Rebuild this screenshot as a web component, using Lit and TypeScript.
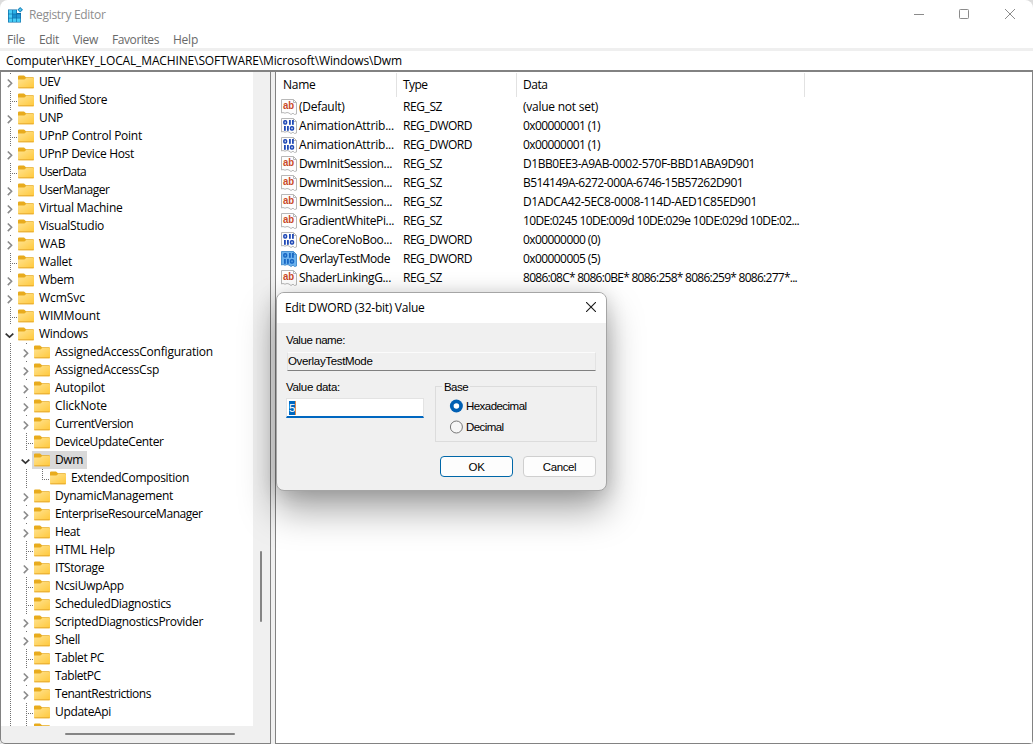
import { LitElement, html, css, svg, nothing } from "lit";
import { customElement, property } from "lit/decorators.js";

/** Text that is tracked so that its advance equals a given width. */
@customElement("fit-text")
class FitText extends LitElement {
  @property({ type: Number }) w = 0;
  @property() text = "";
  static styles = css`
    :host { display: inline-block; white-space: pre; }
  `;
  render() {
    return html`<span>${this.text}</span>`;
  }
  updated() {
    const s = this.renderRoot.querySelector("span") as HTMLElement;
    s.style.letterSpacing = "0px";
    const natural = s.getBoundingClientRect().width;
    if (this.w && this.text.length) s.style.letterSpacing = `${((this.w - natural) / this.text.length).toFixed(3)}px`;
  }
}

const t = (text: string, w: number) => html`<fit-text .text=${text} .w=${w}></fit-text>`;

type Cell = "pass" | "leaf" | "closed" | "open" | "last";
interface Node { name: string; w: number; cells: Cell[]; selected?: boolean }

const top = (name: string, w: number, c: Cell): Node => ({ name, w, cells: [c] });
const sub = (name: string, w: number, c: Cell): Node => ({ name, w, cells: ["pass", c] });

const NODES: Node[] = [
  top("UEV", 21, "closed"),
  top("Unified Store", 68, "leaf"),
  top("UNP", 24, "closed"),
  top("UPnP Control Point", 103, "leaf"),
  top("UPnP Device Host", 95, "closed"),
  top("UserData", 47, "leaf"),
  top("UserManager", 70.5, "closed"),
  top("Virtual Machine", 83.5, "closed"),
  top("VisualStudio", 65, "closed"),
  top("WAB", 26.5, "closed"),
  top("Wallet", 33, "leaf"),
  top("Wbem", 35, "closed"),
  top("WcmSvc", 46, "closed"),
  top("WIMMount", 61, "leaf"),
  top("Windows", 49, "open"),
  sub("AssignedAccessConfiguration", 158, "closed"),
  sub("AssignedAccessCsp", 104, "closed"),
  sub("Autopilot", 50, "closed"),
  sub("ClickNote", 52, "closed"),
  sub("CurrentVersion", 78, "closed"),
  sub("DeviceUpdateCenter", 108.5, "leaf"),
  { name: "Dwm", w: 28, cells: ["pass", "open"], selected: true },
  { name: "ExtendedComposition", w: 118, cells: ["pass", "pass", "last"] },
  sub("DynamicManagement", 118, "closed"),
  sub("EnterpriseResourceManager", 147.5, "closed"),
  sub("Heat", 25, "closed"),
  sub("HTML Help", 60, "leaf"),
  sub("ITStorage", 49, "closed"),
  sub("NcsiUwpApp", 69, "leaf"),
  sub("ScheduledDiagnostics", 116, "leaf"),
  sub("ScriptedDiagnosticsProvider", 148, "closed"),
  sub("Shell", 25, "closed"),
  sub("Tablet PC", 49, "leaf"),
  sub("TabletPC", 45.5, "closed"),
  sub("TenantRestrictions", 96, "closed"),
  sub("UpdateApi", 56, "leaf"),
  sub("", 0, "leaf"),
];

interface Value { name: string; nw: number; type: string; data: string; dw: number; selected?: boolean }
const VALUES: Value[] = [
  { name: "(Default)", nw: 45.5, type: "REG_SZ", data: "(value not set)", dw: 75 },
  { name: "AnimationAttrib...", nw: 95, type: "REG_DWORD", data: "0x00000001 (1)", dw: 77 },
  { name: "AnimationAttrib...", nw: 95, type: "REG_DWORD", data: "0x00000001 (1)", dw: 77 },
  { name: "DwmInitSession...", nw: 93, type: "REG_SZ", data: "D1BB0EE3-A9AB-0002-570F-BBD1ABA9D901", dw: 232 },
  { name: "DwmInitSession...", nw: 93, type: "REG_SZ", data: "B514149A-6272-000A-6746-15B57262D901", dw: 220 },
  { name: "DwmInitSession...", nw: 93, type: "REG_SZ", data: "D1ADCA42-5EC8-0008-114D-AED1C85ED901", dw: 234 },
  { name: "GradientWhitePi...", nw: 95, type: "REG_SZ", data: "10DE:0245 10DE:009d 10DE:029e 10DE:029d 10DE:02...", dw: 276 },
  { name: "OneCoreNoBoo...", nw: 93, type: "REG_DWORD", data: "0x00000000 (0)", dw: 77 },
  { name: "OverlayTestMode", nw: 91, type: "REG_DWORD", data: "0x00000005 (5)", dw: 77, selected: true },
  { name: "ShaderLinkingG...", nw: 92, type: "REG_SZ", data: "8086:08C* 8086:0BE* 8086:258* 8086:259* 8086:277*...", dw: 274 },
];

const folder = html`<svg class="folder" width="16" height="14" viewBox="0 0 16 14">
  <defs><linearGradient id="f" x1="0" y1="0" x2="1" y2="1"><stop offset="0" stop-color="#ffe391" /><stop offset="1" stop-color="#ffc83a" /></linearGradient></defs>
  <path d="M0 1.6Q0 .6 1.2 .6H6L8 2.2H15Q16 2.2 16 3.2V6H0Z" fill="#e8ab1d" />
  <path d="M0 4.6H6.4L8.2 3H15.2Q16 3 16 3.8V12.4Q16 13.2 15.2 13.2H.8Q0 13.2 0 12.4Z" fill="url(#f)" />
  <path d="M.3 12.8H15.7" stroke="#e3a62a" stroke-width=".9" />
</svg>`;

function cell(kind: Cell) {
  const dots = (d: string) => svg`<path d=${d} stroke="#707070" stroke-dasharray="1 1" fill="none" />`;
  const parts = {
    pass: dots("M8.5 0V18"),
    leaf: svg`${dots("M8.5 0V18")}${dots("M10 10.5H15")}`,
    last: svg`${dots("M8.5 0V10")}${dots("M8 10.5H15")}`,
    closed: svg`${dots("M8.5 0V2")}<path d="M5.8 6.5L9.6 10.3L5.8 14.1" stroke="#8a8a8a" stroke-width="1.6" fill="none" />`,
    open: svg`<path d="M3.7 8.6L7.5 12.2L11.3 8.6" stroke="#333" stroke-width="1.7" fill="none" />`,
  };
  return html`<svg class="cell" width="16" height="18" viewBox="0 0 16 18">${parts[kind]}</svg>`;
}

const page = (fill: string, edge: string) => svg`
  <path d="M.5 .5H12.5L15.5 3.5V15L13.5 15.5L12 14.2L10 15.5L8 14L6 13.5L4 14.2L2 13.5L.5 14Z" fill=${fill} stroke=${edge} />
  <path d="M12.5 .5V3.5H15.5" fill="none" stroke=${edge} />`;

const stringIcon = html`<svg class="vicon" width="16" height="16" viewBox="0 0 16 16">
  ${page("#fdfdfd", "#b8b8b8")}
  <text class="ab" x="2" y="10.2" textLength="11.2" lengthAdjust="spacingAndGlyphs">ab</text>
</svg>`;

const binaryIcon = (selected: boolean) => {
  const ink = selected ? "#1767c4" : "#1f49b6";
  return html`<svg class="vicon" width="16" height="16" viewBox="0 0 16 16">
    ${page(selected ? "#6cb2ee" : "#fdfdfd", selected ? "#4a91d0" : "#b8b8b8")}
    <g fill="none" stroke=${ink} stroke-width="1.6">
      <rect x="2.9" y="2.8" width="2.6" height="3.2" rx="1" />
      <rect x="9.6" y="8.8" width="2.8" height="3.2" rx="1" />
    </g>
    <g fill=${ink}>
      <rect x="8" y="2" width="1.8" height="4.8" /><rect x="11" y="2" width="1.8" height="4.8" />
      <rect x="3" y="8" width="1.8" height="4.8" /><rect x="6" y="8" width="1.8" height="4.8" />
    </g>
  </svg>`;
};

@customElement("app-root")
class AppRoot extends LitElement {
  static styles = css`
    :host { display: block; width: 1033px; height: 744px; background: #dcdcdc; overflow: hidden; position: relative;
      font: 12px/18px "Open Sans", "Noto Sans", sans-serif; color: #000; }
    * { box-sizing: border-box; }
    svg { display: block; flex: none; }
    .window { height: 744px; display: flex; flex-direction: column; background: #fff; border-radius: 8px 8px 4px 4px; overflow: hidden; }
    .title { height: 30px; display: flex; align-items: center; padding: 0 18px 0 7px; color: #8e8e8e; flex: none; }
    .title .caption { flex: 1; padding-left: 6px; }
    .controls { display: flex; gap: 35px; padding-bottom: 2px; }
    .controls svg:nth-child(-n + 2) { margin-left: -1px; margin-right: 1px; }
    .menu { height: 18px; display: flex; padding: 1px 0 0 7px; gap: 14px; color: #696969; flex: none; }
    .address { height: 24px; border-top: 3px solid #efefef; border-bottom: 2px solid #828282; padding: 0 6px; line-height: 20px; flex: none; }
    .panes { flex: 1; display: flex; background: #f0f0f0; min-height: 0; }
    .tree { width: 271px; border: 1px solid #828282; border-top: 0; border-bottom-left-radius: 5px; display: grid;
      grid-template: minmax(0, 1fr) 17px / 252px 17px; flex: none; overflow: hidden; }
    .nodes { background: #fff; overflow: hidden; padding: 1px 0 0 1px; }
    .node { display: flex; height: 18px; }
    .label { display: flex; align-items: center; height: 18px; padding-right: 4px; }
    .label fit-text { margin-left: 5px; }
    .label.selected { background: #d9d9d9; margin-left: -2px; padding-left: 2px; }
    .vbar { padding: 479px 0 0 7px; }
    .vbar i { display: block; width: 2px; height: 71px; background: #858585; border-radius: 1px; }
    .hbar { padding: 7px 0 0 64px; grid-column: 1 / 3; }
    .hbar i { display: block; width: 170px; height: 2px; background: #858585; border-radius: 1px; }
    .list { margin-left: 4px; flex: 1; background: #fff; border: 1px solid #828282; border-top: 0; padding-top: 1px; }
    .cols { display: grid; grid-template-columns: 121px 120px 288px 1fr; }
    .head { height: 24px; }
    .head > span { border-right: 1px solid #e2e2e2; padding: 3px 0 0 7px; }
    .head > span:last-child { border: 0; }
    .head > span:nth-child(n + 2) { padding-left: 6px; }
    .row { height: 19px; align-items: center; }
    .row > span { padding-left: 6px; white-space: nowrap; line-height: 19px; }
    .row > .name { display: flex; padding-left: 5px; gap: 2px; align-items: center; }
    .ab { font: bold 11px "Liberation Sans", sans-serif; fill: #c94a28; }
    .dialog { position: absolute; left: 276px; top: 292px; width: 331px; height: 199px; border: 1px solid #a5a5a5; border-radius: 8px;
      background: #f0f0f0; box-shadow: 0 20px 36px rgba(0, 0, 0, .34), 0 2px 20px rgba(0, 0, 0, .16);
      font: 11.5px/14px "Liberation Sans", Arial, sans-serif; display: flex; flex-direction: column; }
    .dtitle { height: 30px; background: #fff; border-radius: 7px 7px 0 0; display: flex; align-items: center; justify-content: space-between;
      padding: 0 10px 0 8px; font: 12px/18px "Open Sans", "Noto Sans", sans-serif; flex: none; }
    .dtitle svg { margin-bottom: 2px; }
    .body { padding: 10px 9px 0; display: flex; flex-direction: column; }
    .readonly { margin: 5px 1px 9px 1px; height: 19px; border: 1px solid #e3e3e3; border-top-color: #fbfbfb; border-bottom-color: #808080; padding: 1px 0; }
    .pair { display: grid; grid-template-columns: 138px 162px; justify-content: space-between; }
    .edit { margin-top: 4px; height: 20px; background: #fff; border: 1px solid #e3e3e3; border-bottom: 2px solid #0067c0; padding: 2px; }
    .edit span { background: #0067c0; color: #fff; display: block; width: 7px; height: 14px; border-right: 1px solid #d98b50; }
    .base { padding: 0 0 0 14px; height: 63px; display: flex; flex-direction: column; position: relative; }
    .frame { position: absolute; inset: 6px 0 1px 0; border: 1px solid #dcdcdc; }
    .legend { position: relative; background: #f0f0f0; height: 14px; align-self: flex-start; margin-left: -7px; padding: 0 2px; }
    .radio { position: relative; height: 21px; display: flex; align-items: center; gap: 3px; }
    .legend + .radio { margin-top: 1px; }
    .buttons { display: flex; justify-content: flex-end; gap: 10px; margin: 13px 1px 0 0; }
    .button { width: 73px; height: 21px; border: 1px solid #cfcfcf; border-radius: 4px; background: #fdfdfd; display: flex; justify-content: center; align-items: center; }
    .button.default { border-color: #0067a8; }
  `;

  render() {
    return html`
      <div class="window">
        <div class="title">
          <svg width="16" height="16" viewBox="0 0 16 16">
            <path d="M1 2.4H10V6H14V15.5H1Z" fill="#0b6aa5" />
            <g fill="#48ccf6">
              <rect x="1.7" y="3.1" width="3.5" height="3.6" /><rect x="5.8" y="3.1" width="3.5" height="3.6" fill="#2db3e8" />
              <rect x="1.7" y="7.3" width="3.5" height="3.5" /><rect x="5.8" y="7.3" width="3.5" height="3.5" fill="#1790cf" /><rect x="9.9" y="7.3" width="3.5" height="3.5" fill="#2398d6" />
              <rect x="1.7" y="11.4" width="3.5" height="3.5" /><rect x="5.8" y="11.4" width="3.5" height="3.5" /><rect x="9.9" y="11.4" width="3.5" height="3.5" />
            </g>
            <path d="M13.2 0L16 2.8L13.2 5.6L10.4 2.8Z" fill="#1685bf" /><path d="M13.2 1.3L14.7 2.8L13.2 4.3L11.7 2.8Z" fill="#5fc9ee" />
          </svg>
          <span class="caption">${t("Registry Editor", 76.5)}</span>
          <div class="controls">
            <svg width="10" height="10" viewBox="0 0 10 10"><path d="M0 5.5H10" stroke="#8b8b8b" /></svg>
            <svg width="10" height="10" viewBox="0 0 10 10"><rect x=".5" y=".5" width="9" height="9" rx=".8" fill="none" stroke="#8b8b8b" /></svg>
            <svg width="10" height="10" viewBox="0 0 10 10"><path d="M0 0L10 10M10 0L0 10" stroke="#8b8b8b" /></svg>
          </div>
        </div>
        <div class="menu">${t("File", 18)}${t("Edit", 20)}${t("View", 25)}${t("Favorites", 47)}${t("Help", 25)}</div>
        <div class="address">${t("Computer\\HKEY_LOCAL_MACHINE\\SOFTWARE\\Microsoft\\Windows\\Dwm", 396)}</div>
        <div class="panes">
          <div class="tree">
            <div class="nodes">
              ${NODES.map((n) => html`<div class="node">
                ${n.cells.map(cell)}
                <div class="label ${n.selected ? "selected" : ""}">${folder}${n.name ? t(n.name, n.w) : nothing}</div>
              </div>`)}
            </div>
            <div class="vbar"><i></i></div>
            <div class="hbar"><i></i></div>
          </div>
          <div class="list">
            <div class="cols head"><span>${t("Name", 32.5)}</span><span>${t("Type", 24.5)}</span><span>${t("Data", 24.5)}</span><span></span></div>
            ${VALUES.map((v) => html`<div class="cols row">
              <span class="name">${v.type === "REG_SZ" ? stringIcon : binaryIcon(!!v.selected)}${t(v.name, v.nw)}</span>
              <span>${t(v.type, v.type === "REG_SZ" ? 39 : 69)}</span>
              <span>${t(v.data, v.dw)}</span>
            </div>`)}
          </div>
        </div>
      </div>
      <div class="dialog">
        <div class="dtitle">${t("Edit DWORD (32-bit) Value", 139.5)}
          <svg width="10" height="10" viewBox="0 0 10 10"><path d="M0 0L10 10M10 0L0 10" stroke="#1a1a1a" stroke-width="1.1" /></svg>
        </div>
        <div class="body">
          <div>${t("Value name:", 59)}</div>
          <div class="readonly">${t("OverlayTestMode", 84.5)}</div>
          <div class="pair">
            <div><div>${t("Value data:", 54)}</div><div class="edit"><span>5</span></div></div>
            <div class="base"><div class="frame"></div>
              <div class="legend">${t("Base", 24)}</div>
              <div class="radio"><svg width="14" height="14" viewBox="0 0 14 14"><circle cx="7.4" cy="7" r="6.5" fill="#005fb3" /><circle cx="7.4" cy="7" r="2.8" fill="#fff" /></svg>${t("Hexadecimal", 60.5)}</div>
              <div class="radio"><svg width="14" height="14" viewBox="0 0 14 14"><circle cx="7.4" cy="7" r="6" fill="#f6f6f6" stroke="#777" /></svg>${t("Decimal", 37.5)}</div>
            </div>
          </div>
          <div class="buttons"><div class="button default">${t("OK", 16)}</div><div class="button">${t("Cancel", 33.5)}</div></div>
        </div>
      </div>
    `;
  }
}
